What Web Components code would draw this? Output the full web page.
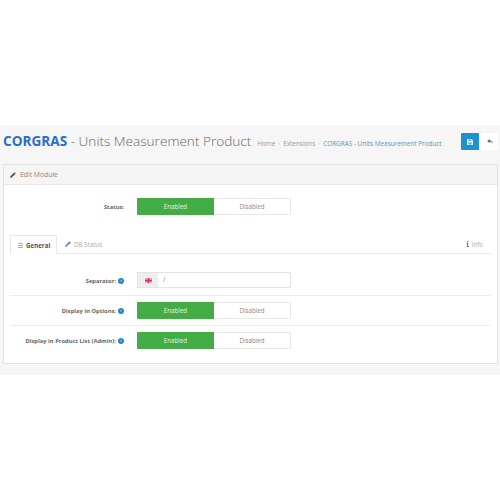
<!DOCTYPE html>
<html>
<head>
<meta charset="utf-8">
<style>
  html, body { margin: 0; background: #fff; }
  body { font-family: "Open Sans", "Liberation Sans", sans-serif; color: #666; padding-top: 125px; }
</style>
</head>
<body>
<module-page>
  <page-header slot="header"></page-header>
  <edit-panel>
    <form-row label="Status:" first><toggle-switch></toggle-switch></form-row>
    <module-tabs></module-tabs>
    <form-row label="Separator:" help><lang-input value="/"></lang-input></form-row>
    <form-row label="Display in Options:" help divider><toggle-switch></toggle-switch></form-row>
    <form-row label="Display in Product List (Admin):" help divider last><toggle-switch></toggle-switch></form-row>
  </edit-panel>
</module-page>

<script>
  class ModulePage extends HTMLElement {
    constructor () {
      super()
      this.attachShadow({ mode: 'open' }).innerHTML = `
        <style>
          :host { display: block; background: #f6f6f6; height: 250px; box-sizing: border-box; padding: 0 2px 0 3px; }
        </style>
        <slot name="header"></slot>
        <slot></slot>`
    }
  }

  class PageHeader extends HTMLElement {
    constructor () {
      super()
      this.attachShadow({ mode: 'open' }).innerHTML = `
        <style>
          :host { display: flex; align-items: flex-start; height: 39px; }
          h1 { margin: 0; font-size: 13.6px; font-weight: 300; color: #666; white-space: nowrap; line-height: 32px; }
          b { font-weight: 700; color: #2a6ecb; }
          nav { display: flex; align-items: center; margin: 14px 0 0 6px; line-height: 9px; font-size: 6.4px; color: #999; white-space: nowrap; }
          nav i { font-style: normal; margin: 0 3px; font-size: 6px; color: #bbb; }
          nav a { color: #5a93c4; }
          .btns { margin: 8px 0 0 auto; display: flex; gap: 2px; }
          button { width: 18px; height: 17px; padding: 0; border: 0; border-radius: 1px; display: flex; align-items: center; justify-content: center; }
          .save { background: #1e91cf; }
          .back { background: #fff; width: 17px; }
        </style>
        <h1><b>CORGRAS</b> - Units Measurement Product</h1>
        <nav>Home<i>›</i>Extensions<i>›</i><a>CORGRAS - Units Measurement Product</a></nav>
        <div class="btns">
          <button class="save"><svg width="6" height="6" viewBox="0 0 7 7"><path fill="#e8f3fa" d="M0 0h5.6L7 1.400V7H0z"/><path fill="#1e91cf" d="M1.500 .6h3.400v1.700H1.500zM1.500 4h4v2.400h-4z" opacity=".7"/></svg></button>
          <button class="back"><svg width="6" height="5" viewBox="0 0 8 7"><path fill="#666" d="M3.400 0v1.700C6.200 1.800 8 3.400 7.800 6.600 7 4.800 5.600 4 3.400 4v1.800L0 2.900z"/></svg></button>
        </div>`
    }
  }

  class EditPanel extends HTMLElement {
    constructor () {
      super()
      this.attachShadow({ mode: 'open' }).innerHTML = `
        <style>
          :host { display: block; background: #fff; border: 1px solid #e2e2e2; height: 200px; box-sizing: border-box; }
          header { display: flex; align-items: center; gap: 4px; height: 19px; padding-left: 6px; background: #f5f5f5; border-bottom: 1px solid #e6e6e6; font-size: 6.8px; color: #888; }
          .body { padding: 13px 6px 0 6px; }
        </style>
        <header>
          <svg width="6" height="6" viewBox="0 0 7 7"><path fill="#555" d="M0 7l.5-2L4.800.7l1.500 1.500L2 6.500zM5.200.3l.4-.3L7 1.400l-.3.400z"/></svg>
          Edit Module
        </header>
        <div class="body"><slot></slot></div>`
    }
  }

  class FormRow extends HTMLElement {
    constructor () {
      super()
      const label = this.getAttribute('label')
      const help = this.hasAttribute('help')
        ? '<svg width="6" height="6" viewBox="0 0 6 6"><circle cx="3" cy="3" r="3" fill="#2b84c4"/><path fill="#cfe5f4" d="M2.600 3.400h.8v.6h-.8zM2 2.200c.2-.7 2-.8 2 .1 0 .6-.7.6-.7 1h-.7c0-.8.7-.7.700-1.100 0-.3-.8-.2-.9.200z"/></svg>'
        : ''
      this.attachShadow({ mode: 'open' }).innerHTML = `
        <style>
          :host { display: grid; grid-template-columns: 114px 154px; column-gap: 13px; align-items: start; box-sizing: border-box; padding: 6px 0; }
          :host([divider]) { border-top: 1px solid #ededed; }
          :host([first]) { padding: 0; width: 100%; }
          :host([last]) { padding-bottom: 0; }
          .label { display: flex; justify-content: flex-end; align-items: center; gap: 2px; font-size: 5.8px; font-weight: 700; color: #666; white-space: nowrap; height: 17px; }
        </style>
        <div class="label"><span>${label}</span>${help}</div>
        <div><slot></slot></div>`
    }
  }

  class ToggleSwitch extends HTMLElement {
    constructor () {
      super()
      this.attachShadow({ mode: 'open' }).innerHTML = `
        <style>
          :host { display: flex; height: 17px; font-size: 6.2px; box-sizing: border-box; }
          span { display: flex; align-items: center; justify-content: center; box-sizing: border-box; }
          .on { width: 77px; background: #43ac47; color: #e4f3e5; border-radius: 1px 0 0 1px; }
          .off { flex: 1; background: #fff; color: #888; border: 1px solid #e8e8e8; border-left: 0; border-radius: 0 1px 1px 0; }
        </style>
        <span class="on">Enabled</span><span class="off">Disabled</span>`
    }
  }

  class LangInput extends HTMLElement {
    constructor () {
      super()
      this.attachShadow({ mode: 'open' }).innerHTML = `
        <style>
          :host { display: flex; height: 16px; box-sizing: border-box; border: 1px solid #e4e4e4; font-size: 6.500px; color: #777; background: #fff; }
          .flag { width: 20px; background: #eeeeee; display: flex; align-items: center; justify-content: center; }
          .val { padding-left: 5px; line-height: 14px; }
        </style>
        <div class="flag"><svg width="7" height="5" viewBox="0 0 7 5"><rect width="7" height="5" fill="#d8b4c0"/><path d="M0 2.500h7M3.500 0v5" stroke="#d8324e" stroke-width="1.400"/></svg></div>
        <div class="val">${this.getAttribute('value')}</div>`
    }
  }

  class ModuleTabs extends HTMLElement {
    constructor () {
      super()
      this.attachShadow({ mode: 'open' }).innerHTML = `
        <style>
          :host { display: flex; align-items: flex-end; height: 19px; margin-top: 19px; margin-bottom: 12px; border-bottom: 1px solid #e8e8e8; font-size: 6.2px; color: #aaa; }
          div { display: flex; align-items: center; gap: 3px; height: 18px; box-sizing: border-box; }
          .active { width: 47px; height: 19px; margin-bottom: -1px; padding-left: 7px; background: #fff; border: 1px solid #e8e8e8; border-bottom: 0; color: #555; font-weight: 700; }
          .db { margin-left: 8px; }
          .info { margin-left: auto; margin-right: 8px; }
        </style>
        <div class="active"><svg width="5" height="5" viewBox="0 0 5 5"><path stroke="#9db2c4" d="M0 .5h5M0 2.500h5M0 4.500h5"/></svg>General</div>
        <div class="db"><svg width="6" height="6" viewBox="0 0 6 6"><path fill="#4f7ea8" d="M0 5l3-3C2.800 1 3.600 0 5 0L4 1.200 4.800 2 6 1c0 1.400-1 2.200-2 2L1 6z"/></svg>DB Status</div>
        <div class="info"><svg width="3" height="6" viewBox="0 0 3 6"><path fill="#4f7ea8" d="M1 0h1.200v1.200H1zM.4 2h1.800v3.200H3V6H.4v-.8h.7V2.800H.4z"/></svg>Info</div>`
    }
  }

  customElements.define('module-page', ModulePage)
  customElements.define('page-header', PageHeader)
  customElements.define('edit-panel', EditPanel)
  customElements.define('form-row', FormRow)
  customElements.define('toggle-switch', ToggleSwitch)
  customElements.define('lang-input', LangInput)
  customElements.define('module-tabs', ModuleTabs)
</script>
</body>
</html>
